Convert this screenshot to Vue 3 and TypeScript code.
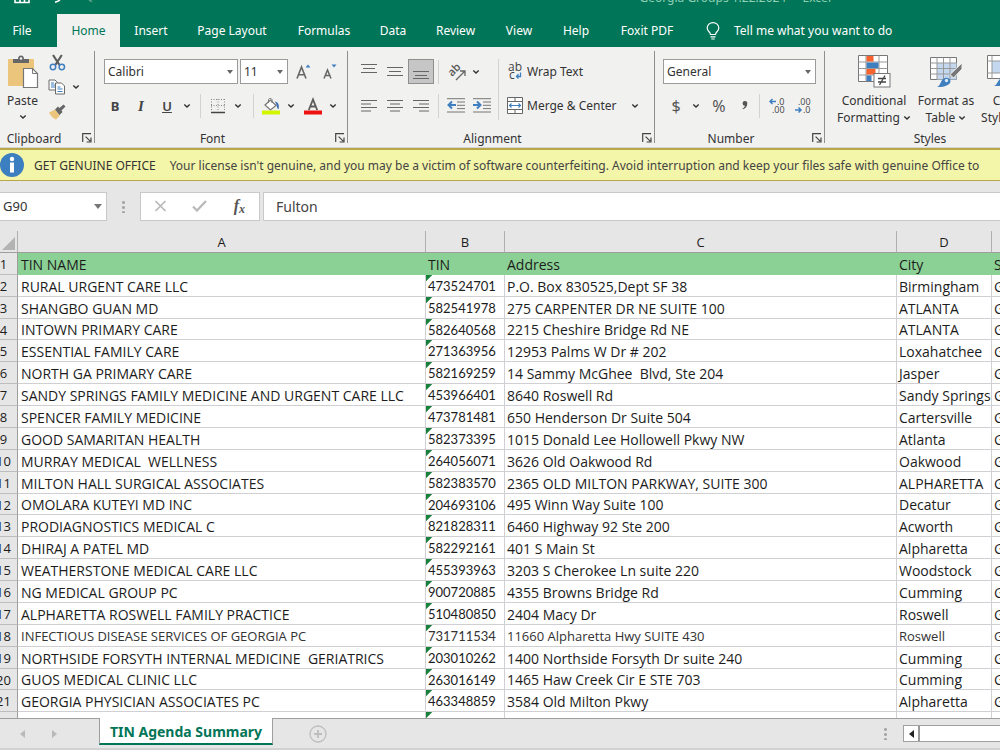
<script setup lang="ts">
import { ref } from 'vue'

interface Row {
  name: string
  tin: string
  address: string
  city: string
  small?: boolean
}

const tabs: string[] = ['File', 'Home', 'Insert', 'Page Layout', 'Formulas', 'Data', 'Review', 'View', 'Help', 'Foxit PDF']
const activeTab = ref('Home')
const fontName = ref('Calibri')
const fontSize = ref('11')
const numberFormat = ref('General')
const cellRef = ref('G90')
const formula = ref('Fulton')
const columns: string[] = ['A', 'B', 'C', 'D', 'E']

const rows: Row[] = [
  { name: 'RURAL URGENT CARE LLC', tin: '473524701', address: 'P.O. Box 830525,Dept SF 38', city: 'Birmingham' },
  { name: 'SHANGBO GUAN MD', tin: '582541978', address: '275 CARPENTER DR NE SUITE 100', city: 'ATLANTA' },
  { name: 'INTOWN PRIMARY CARE', tin: '582640568', address: '2215 Cheshire Bridge Rd NE', city: 'ATLANTA' },
  { name: 'ESSENTIAL FAMILY CARE', tin: '271363956', address: '12953 Palms W Dr # 202', city: 'Loxahatchee' },
  { name: 'NORTH GA PRIMARY CARE', tin: '582169259', address: '14 Sammy McGhee  Blvd, Ste 204', city: 'Jasper' },
  { name: 'SANDY SPRINGS FAMILY MEDICINE AND URGENT CARE LLC', tin: '453966401', address: '8640 Roswell Rd', city: 'Sandy Springs' },
  { name: 'SPENCER FAMILY MEDICINE', tin: '473781481', address: '650 Henderson Dr Suite 504', city: 'Cartersville' },
  { name: 'GOOD SAMARITAN HEALTH', tin: '582373395', address: '1015 Donald Lee Hollowell Pkwy NW', city: 'Atlanta' },
  { name: 'MURRAY MEDICAL  WELLNESS', tin: '264056071', address: '3626 Old Oakwood Rd', city: 'Oakwood' },
  { name: 'MILTON HALL SURGICAL ASSOCIATES', tin: '582383570', address: '2365 OLD MILTON PARKWAY, SUITE 300', city: 'ALPHARETTA' },
  { name: 'OMOLARA KUTEYI MD INC', tin: '204693106', address: '495 Winn Way Suite 100', city: 'Decatur' },
  { name: 'PRODIAGNOSTICS MEDICAL C', tin: '821828311', address: '6460 Highway 92 Ste 200', city: 'Acworth' },
  { name: 'DHIRAJ A PATEL MD', tin: '582292161', address: '401 S Main St', city: 'Alpharetta' },
  { name: 'WEATHERSTONE MEDICAL CARE LLC', tin: '455393963', address: '3203 S Cherokee Ln suite 220', city: 'Woodstock' },
  { name: 'NG MEDICAL GROUP PC', tin: '900720885', address: '4355 Browns Bridge Rd', city: 'Cumming' },
  { name: 'ALPHARETTA ROSWELL FAMILY PRACTICE', tin: '510480850', address: '2404 Macy Dr', city: 'Roswell' },
  { name: 'INFECTIOUS DISEASE SERVICES OF GEORGIA PC', tin: '731711534', address: '11660 Alpharetta Hwy SUITE 430', city: 'Roswell', small: true },
  { name: 'NORTHSIDE FORSYTH INTERNAL MEDICINE  GERIATRICS', tin: '203010262', address: '1400 Northside Forsyth Dr suite 240', city: 'Cumming' },
  { name: 'GUOS MEDICAL CLINIC LLC', tin: '263016149', address: '1465 Haw Creek Cir E STE 703', city: 'Cumming' },
  { name: 'GEORGIA PHYSICIAN ASSOCIATES PC', tin: '463348859', address: '3584 Old Milton Pkwy', city: 'Alpharetta' },
]
</script>

<template>
  <div class="app">
    <svg class="defs" aria-hidden="true">
      <symbol id="chev" viewBox="0 0 8 6"><path d="M1.300 1.500l2.700 2.600 2.700-2.600" fill="none" stroke="#333" stroke-width="1.400" /></symbol>
      <symbol id="launch" viewBox="0 0 10 10"><path d="M.7 9V.7H9M3.6 3.6l4.600 4.600M9 4.600V9H4.600" fill="none" stroke="#444" stroke-width="1.200" /></symbol>
    </svg>

    <header class="top">
      <div class="title-bar">
        <div class="quick">
          <svg width="16" height="4" viewBox="0 0 16 4"><path d="M1 0v2.500h14V0M6 0v2.500M10.500 0v2.500" fill="none" stroke="#fff" stroke-width="1.600" /></svg>
          <svg width="8" height="4" viewBox="0 0 8 4"><path d="M1 2.200Q4 1.500 6 0" fill="none" stroke="#fff" stroke-width="1.500" /></svg>
          <svg width="8" height="4" viewBox="0 0 8 4"><path d="M6 1.500L3 0" fill="none" stroke="#5da58a" stroke-width="1.500" /></svg>
        </div>
        <span class="title">Georgia Groups 1.22.2024 &nbsp;-&nbsp; Excel</span>
      </div>
      <nav class="tabs">
        <button v-for="t in tabs" :key="t" type="button" class="tab" :class="{ active: t === activeTab }" @click="activeTab = t">{{ t }}</button>
        <button type="button" class="tell">
          <svg width="14" height="18" viewBox="0 0 14 18" fill="none" stroke="#fff" stroke-width="1.200"><path d="M4.500 12.500c0-2.500-3.300-3.200-3.300-6.600a5.800 5.300 0 0 1 11.600 0c0 3.400-3.300 4.100-3.300 6.600zM4.500 14.800h5M5.300 17h3.400" /></svg>
          <span>Tell me what you want to do</span>
        </button>
      </nav>
    </header>

    <section class="ribbon">
      <div class="group clipboard">
        <div class="body">
          <button type="button" class="paste">
            <svg width="32" height="34" viewBox="0 0 32 34">
              <rect x="1" y="4" width="26" height="27" rx="1" fill="#ecc57c" />
              <path d="M6 8V4h5a3 3.500 0 0 1 6 0h5v4z" fill="#666" /><circle cx="14" cy="3.500" r="1.300" fill="#f1f1f0" />
              <path d="M16.500 13.500h9l5 5v14h-14z" fill="#fff" stroke="#777" stroke-width="1.200" /><path d="M25.500 13.500v5h5" fill="none" stroke="#777" />
            </svg>
            <span>Paste</span>
            <svg width="8" height="6"><use href="#chev" /></svg>
          </button>
          <div class="clips">
            <button type="button" aria-label="Cut">
              <svg width="17" height="17" viewBox="0 0 17 17" fill="none"><path d="M4 1l6.500 10M12.800 1L6.300 11" stroke="#5c5c5c" stroke-width="2.200" /><circle cx="4" cy="13" r="2.700" stroke="#3f7fbf" stroke-width="1.500" /><circle cx="12.800" cy="13" r="2.700" stroke="#3f7fbf" stroke-width="1.500" /></svg>
            </button>
            <button type="button" aria-label="Copy" class="copy">
              <svg width="18" height="16" viewBox="0 0 18 16"><path d="M1 1h6l2.500 2.500V11H1z" fill="#fff" stroke="#6a6a6a" /><path d="M3 4h3M3 6h4M3 8h4" stroke="#3f7fbf" /><path d="M7.500 4h6l3 3v8h-9z" fill="#fff" stroke="#6a6a6a" /><path d="M9.500 8h3M9.500 10h5M9.500 12.500h5" stroke="#3f7fbf" /></svg>
              <svg class="more" width="8" height="6"><use href="#chev" /></svg>
            </button>
            <button type="button" aria-label="Format Painter">
              <svg width="18" height="16" viewBox="0 0 18 16"><path d="M1 8.500l6-3 5 6-4 4C5 14.500 3 12 1 8.500z" fill="#ecc57c" /><path d="M7 5.500l3-3 1.500 1.500L15.500.500l2 2-4 4 1 1.500-3 3z" fill="#666" /></svg>
            </button>
          </div>
        </div>
        <div class="caption"><span>Clipboard</span><button type="button" class="launch" aria-label="Clipboard settings"><svg width="10" height="10"><use href="#launch" /></svg></button></div>
      </div>

      <div class="group font">
        <div class="body col">
          <div class="line">
            <label class="pick name"><select v-model="fontName" aria-label="Font"><option>Calibri</option></select></label>
            <label class="pick size"><select v-model="fontSize" aria-label="Font size"><option>11</option></select></label>
            <button type="button" class="w26 grow" aria-label="Increase font size">
              <svg width="15" height="18" viewBox="0 0 15 18"><path d="M1 15.500L5.500 4l4.500 11.500M2.600 11.800h5.800" fill="none" stroke="#666" stroke-width="1.600" /><path d="M9.500 4.500L12 1.500l2.500 3z" fill="#3f7fbf" /></svg>
            </button>
            <button type="button" class="w26" aria-label="Decrease font size">
              <svg width="15" height="18" viewBox="0 0 15 18"><path d="M1 15.500L4.500 7 8 15.500M2.300 12.500h4.400" fill="none" stroke="#666" stroke-width="1.500" /><path d="M8.500 1.500h5l-2.500 3z" fill="#3f7fbf" /></svg>
            </button>
          </div>
          <div class="line fmt">
            <button type="button" class="w26 glyph"><b>B</b></button>
            <button type="button" class="w26 glyph"><i>I</i></button>
            <button type="button" class="w26 glyph"><u>U</u></button>
            <button type="button" class="drop slim" aria-label="Underline styles"><svg width="8" height="6"><use href="#chev" /></svg></button>
            <span class="sep"></span>
            <button type="button" class="w22" aria-label="Borders">
              <svg width="16" height="16" viewBox="0 0 16 16"><path d="M1 1.500h14M1.500 1v12M14.500 1v12M8 1v12M1 7.500h14" stroke="#888" stroke-dasharray="1 1.500" /><path d="M1 14.500h14" stroke="#444" stroke-width="1.500" /></svg>
            </button>
            <button type="button" class="drop" aria-label="Border styles"><svg width="8" height="6"><use href="#chev" /></svg></button>
            <span class="sep"></span>
            <button type="button" class="w22" aria-label="Fill Color">
              <svg width="19" height="18" viewBox="0 0 19 18"><path d="M3 8l5.500-5L14 8.500 8.500 13z" fill="#fff" stroke="#777" stroke-width="1.200" /><path d="M6.500 6V2.500a2 2 0 0 1 3.500 0V6" fill="none" stroke="#777" /><path d="M13 4.500c3 .5 4.500 3 3.700 7.500-1.400 0-1.700-1.500-2-3.500z" fill="#3f6fb0" /><rect x="0" y="13.500" width="18" height="4" fill="#d2f500" /></svg>
            </button>
            <button type="button" class="drop" aria-label="Fill palette"><svg width="8" height="6"><use href="#chev" /></svg></button>
            <button type="button" class="w26" aria-label="Font Color">
              <svg width="18" height="18" viewBox="0 0 18 18"><path d="M4.800 13L9 2.500 13.200 13M6 9.500h6" fill="none" stroke="#5c5c5c" stroke-width="1.800" /><rect y="13.500" width="18" height="4" fill="#ee1111" /></svg>
            </button>
            <button type="button" class="drop slim" aria-label="Font palette"><svg width="8" height="6"><use href="#chev" /></svg></button>
          </div>
        </div>
        <div class="caption"><span>Font</span><button type="button" class="launch" aria-label="Font settings"><svg width="10" height="10"><use href="#launch" /></svg></button></div>
      </div>

      <div class="group alignment">
        <div class="body">
          <div class="col">
            <div class="line">
              <button type="button" class="w26" aria-label="Top Align"><svg width="16" height="16" viewBox="0 0 16 16"><path d="M0 .5h16M2 4.500h12M0 8.500h16" stroke="#666" /></svg></button>
              <button type="button" class="w26" aria-label="Middle Align"><svg width="16" height="16" viewBox="0 0 16 16"><path d="M0 3.500h16M2 7.500h12M0 11.500h16" stroke="#666" /></svg></button>
              <button type="button" class="w26 pressed" aria-label="Bottom Align"><svg width="16" height="16" viewBox="0 0 16 16"><path d="M0 7.500h16M2 11.500h12M0 14.500h16" stroke="#666" /></svg></button>
              <span class="sep"></span>
              <button type="button" class="w26" aria-label="Orientation">
                <svg width="20" height="18" viewBox="0 0 20 18"><text x="0" y="0" transform="translate(6 14) rotate(-45)" font-family="Open Sans, sans-serif" font-size="11" font-weight="600" fill="#555">ab</text><path d="M10 17L18.500 8.500M14 8h5v5" fill="none" stroke="#666" stroke-width="1.300" /></svg>
              </button>
              <button type="button" class="drop slim" aria-label="Orientation options"><svg width="8" height="6"><use href="#chev" /></svg></button>
            </div>
            <div class="line">
              <button type="button" class="w26" aria-label="Align Left"><svg width="16" height="12" viewBox="0 0 16 12"><path d="M0 .5h16M0 4h10M0 7.500h16M0 11h10" stroke="#666" /></svg></button>
              <button type="button" class="w26" aria-label="Center"><svg width="16" height="12" viewBox="0 0 16 12"><path d="M0 .5h16M3 4h10M0 7.500h16M3 11h10" stroke="#666" /></svg></button>
              <button type="button" class="w26" aria-label="Align Right"><svg width="16" height="12" viewBox="0 0 16 12"><path d="M0 .5h16M6 4h10M0 7.500h16M6 11h10" stroke="#666" /></svg></button>
              <span class="sep"></span>
              <button type="button" class="w26" aria-label="Decrease Indent"><svg width="18" height="15" viewBox="0 0 18 15"><path d="M0 .7h18M10 4h8M10 7.300h8M10 10.600h8M0 14h18" stroke="#777" /><path d="M9 7H2M5 3.500L1.500 7 5 10.500" fill="none" stroke="#3f7fbf" stroke-width="2" /></svg></button>
              <button type="button" class="w26" aria-label="Increase Indent"><svg width="18" height="15" viewBox="0 0 18 15"><path d="M0 .7h18M10 4h8M10 7.300h8M10 10.600h8M0 14h18" stroke="#777" /><path d="M0 7h7M4 3.500L7.500 7 4 10.500" fill="none" stroke="#3f7fbf" stroke-width="2" /></svg></button>
            </div>
          </div>
          <span class="sep tall"></span>
          <div class="col">
            <button type="button" class="line wide">
              <svg width="16" height="19" viewBox="0 0 16 19"><text x="1" y="9" font-family="Open Sans, sans-serif" font-size="12" fill="#444">ab</text><text x="2" y="17" font-family="Open Sans, sans-serif" font-size="12" fill="#444">c</text><path d="M13.500 10.500v4H9.500M11.500 12.300l-2 2.200 2 2" fill="none" stroke="#3f7fbf" stroke-width="1.300" /></svg>
              <span>Wrap Text</span>
            </button>
            <button type="button" class="line wide">
              <svg width="16" height="17" viewBox="0 0 16 17"><path d="M.5.500h15v16H.5zM.5 4.500h15M.5 12.500h15M8 .5v4M8 12.500v4" fill="#fff" stroke="#666" /><path d="M2.500 8.500h11M4.500 6.500l-2 2 2 2M11.500 6.500l2 2-2 2" fill="none" stroke="#3f7fbf" stroke-width="1.200" /></svg>
              <span>Merge &amp; Center</span>
              <svg class="push" width="8" height="6"><use href="#chev" /></svg>
            </button>
          </div>
        </div>
        <div class="caption"><span>Alignment</span><button type="button" class="launch" aria-label="Alignment settings"><svg width="10" height="10"><use href="#launch" /></svg></button></div>
      </div>

      <div class="group number">
        <div class="body col">
          <div class="line"><label class="pick general"><select v-model="numberFormat" aria-label="Number format"><option>General</option></select></label></div>
          <div class="line">
            <button type="button" class="w26 sign">$</button>
            <button type="button" class="drop slim" aria-label="Currency"><svg width="8" height="6"><use href="#chev" /></svg></button>
            <button type="button" class="sign percent">%</button>
            <button type="button" class="sign comma" aria-label="Comma Style"><svg width="6" height="9" viewBox="0 0 6 9"><path d="M3 0a2.300 2.300 0 0 1 2.300 2.500C5.300 5.500 3.500 7.500.8 8.300L.5 7.500C2 6.800 2.800 5.800 2.900 4.700A2.300 2.300 0 0 1 3 0z" fill="#555" /></svg></button>
            <span class="sep"></span>
            <button type="button" class="w26" aria-label="Increase Decimal"><svg width="17" height="16" viewBox="0 0 17 16"><path d="M7 3.500H1M3.500 1L1 3.500 3.500 6" fill="none" stroke="#3f7fbf" stroke-width="1.500" /><text x="8" y="7" font-family="Open Sans, sans-serif" font-size="9" fill="#444">.0</text><text x="3" y="15" font-family="Open Sans, sans-serif" font-size="9" fill="#444">.00</text></svg></button>
            <button type="button" class="w26" aria-label="Decrease Decimal"><svg width="17" height="16" viewBox="0 0 17 16"><path d="M0 12h6M3.500 9.500L6 12l-2.500 2.500" fill="none" stroke="#3f7fbf" stroke-width="1.500" /><text x="3" y="7" font-family="Open Sans, sans-serif" font-size="9" fill="#444">.00</text><text x="8" y="15" font-family="Open Sans, sans-serif" font-size="9" fill="#444">.0</text></svg></button>
          </div>
        </div>
        <div class="caption"><span>Number</span><button type="button" class="launch" aria-label="Number settings"><svg width="10" height="10"><use href="#launch" /></svg></button></div>
      </div>

      <div class="group styles">
        <div class="body">
          <button type="button" class="big first">
            <svg width="34" height="34" viewBox="0 0 34 34"><path d="M1.500 1.500h29v26h-29z" fill="#fff" stroke="#777" /><path d="M9 1.500v26M22 1.500v26M1.500 8h29M1.500 14.500h29M1.500 21h29" stroke="#999" /><path d="M9.500 2h7v5.500h-7zM9.500 15h9v5.500h-9z" fill="#f8622f" /><path d="M9.500 8.500h12V14h-12zM9.500 21.500h5V27h-5z" fill="#3f7fbf" /><rect x="17" y="19.500" width="16" height="13.500" fill="#fff" stroke="#777" /><path d="M21 24.500h8M21 28h8M28 21.500l-5.500 9.500" stroke="#444" stroke-width="1.300" /></svg>
            <span>Conditional<br>Formatting <svg width="8" height="6"><use href="#chev" /></svg></span>
          </button>
          <button type="button" class="big">
            <svg width="34" height="34" viewBox="0 0 34 34"><path d="M1.500 3.500h26v22h-26z" fill="#fff" stroke="#777" /><path d="M8 9h19.500v16.500H8z" fill="#c3d8ef" /><path d="M8 3.500v22M14.500 3.500v22M21 3.500v22M1.500 9h26M1.500 14.500h26M1.500 20h26" stroke="#999" /><path d="M33 9v6l-8.500 9-3.500-3.500z" fill="#777" stroke="#f1f1f0" /><path d="M8 33c3-1 3-4 5.500-7.500 3-3.500 8-1.500 8 1.500 0 4.500-8 6.500-13.500 6z" fill="#3f7fbf" /><circle cx="17.500" cy="26.500" r="1.700" fill="#dce9f6" /></svg>
            <span>Format as<br>Table <svg width="8" height="6"><use href="#chev" /></svg></span>
          </button>
          <button type="button" class="big last">
            <svg width="34" height="34" viewBox="0 0 34 34"><path d="M1.500 1.500h29v23h-29z" fill="#fff" stroke="#777" /><path d="M6 7h20v12H6z" fill="#c3d8ef" /><path d="M6 1.500v23M26 1.500v23M1.500 7h29M1.500 19h29" stroke="#999" /><path d="M8 32c3-1 3-4 5.500-6.500 3-3 8-1.500 8 1.500 0 4.500-8 5.500-13.500 5z" fill="#3f7fbf" /></svg>
            <span>Cell<br>Styles <svg width="8" height="6"><use href="#chev" /></svg></span>
          </button>
        </div>
        <div class="caption"><span>Styles</span></div>
      </div>
    </section>

    <div class="notice" role="status">
      <svg width="24" height="24" viewBox="0 0 24 24"><circle cx="12" cy="12" r="12" fill="#3c7fc0" /><circle cx="12" cy="6" r="2.200" fill="#fff" /><rect x="10" y="9.500" width="4" height="10" fill="#fff" /></svg>
      <span class="lead">GET GENUINE OFFICE</span>
      <span>Your license isn't genuine, and you may be a victim of software counterfeiting. Avoid interruption and keep your files safe with genuine Office to</span>
    </div>

    <div class="formula-bar">
      <label class="pick ref"><input v-model="cellRef" aria-label="Name box"></label>
      <span class="dots"></span>
      <div class="checks">
        <button type="button" aria-label="Cancel"><svg width="13" height="12" viewBox="0 0 13 12"><path d="M1.500 1l10 10M11.500 1l-10 10" stroke="#b8b8b8" stroke-width="1.700" /></svg></button>
        <button type="button" aria-label="Enter"><svg width="15" height="12" viewBox="0 0 15 12"><path d="M1 6.500l4 4L14 1" fill="none" stroke="#b8b8b8" stroke-width="2.200" /></svg></button>
        <button type="button" class="fx" aria-label="Insert Function"><i>f</i><i class="x">x</i></button>
      </div>
      <input v-model="formula" class="formula" aria-label="Formula bar">
    </div>

    <main class="sheet">
      <table>
        <colgroup><col class="c-num"><col class="c-a"><col class="c-b"><col class="c-c"><col class="c-d"><col class="c-e"></colgroup>
        <thead>
          <tr>
            <th class="corner"><svg width="13" height="13" viewBox="0 0 13 13"><path d="M13 0v13H0z" fill="#b3b3b3" /></svg></th>
            <th v-for="c in columns" :key="c" scope="col">{{ c }}</th>
          </tr>
        </thead>
        <tbody>
          <tr class="fields">
            <th scope="row">1</th>
            <td>TIN NAME</td><td>TIN</td><td>Address</td><td>City</td><td>State</td>
          </tr>
          <tr v-for="(r, i) in rows" :key="r.tin" :class="{ small: r.small }">
            <th scope="row">{{ i + 2 }}</th>
            <td>{{ r.name }}</td><td class="flag">{{ r.tin }}</td><td>{{ r.address }}</td><td>{{ r.city }}</td><td>GA</td>
          </tr>
          <tr><th scope="row">22</th><td></td><td class="flag"></td><td></td><td></td><td></td></tr>
        </tbody>
      </table>
    </main>

    <footer class="sheet-tabs">
      <button type="button" class="nav" aria-label="Previous sheet"><svg width="6" height="8" viewBox="0 0 6 8"><path d="M5 0v8L0 4z" fill="#b9b9b9" /></svg></button>
      <button type="button" class="nav" aria-label="Next sheet"><svg width="6" height="8" viewBox="0 0 6 8"><path d="M1 0v8l5-4z" fill="#b9b9b9" /></svg></button>
      <button type="button" class="current">TIN Agenda Summary</button>
      <button type="button" class="add" aria-label="New sheet"><svg width="18" height="18" viewBox="0 0 18 18" fill="none" stroke="#bdbdbd"><circle cx="9" cy="9" r="8" stroke-width="1.300" /><path d="M9 5v8M5 9h8" stroke-width="1.800" /></svg></button>
      <span class="dots"></span>
      <div class="scroll"><button type="button" aria-label="Scroll left"><svg width="5" height="8" viewBox="0 0 5 8"><path d="M5 0v8L0 4z" fill="#222" /></svg></button><span class="thumb"></span></div>
    </footer>
  </div>
</template>

<style>
body { margin: 0; background: #e6e6e6; }
</style>

<style scoped>
.app { height: 100vh; display: flex; flex-direction: column; overflow: hidden; background: #e6e6e6; font: 12px/16px "Noto Sans", "Open Sans", sans-serif; color: #333; }
.app * { box-sizing: border-box; }
button { font: inherit; color: inherit; background: none; border: 0; padding: 0; margin: 0; display: flex; align-items: center; justify-content: center; flex: none; white-space: nowrap; }
svg { display: block; flex: none; }
.defs { position: absolute; width: 0; height: 0; }

.top { background: #017557; color: #fff; flex: none; }
.title-bar { height: 14px; overflow: hidden; display: flex; justify-content: space-between; }
.quick { display: flex; gap: 24px; padding-left: 14px; }
.title { margin: -10px 169px 0 0; color: #8fd0b5; white-space: nowrap; }
.tabs { display: grid; grid-template-columns: 57px 63px 62px 100px 84px 54px 71px 56px 58px 84px 1fr; height: 33px; }
.tab:first-child { padding-right: 13px; }
.tab.active { background: #f1f1f0; color: #017557; }
.tell { justify-content: flex-start; gap: 14px; padding-left: 17px; }

.ribbon { display: flex; flex: none; background: #f1f1f0; border-bottom: 1px solid #d5d5d5; overflow: hidden; }
.group { position: relative; flex: none; padding: 12px 0 0 8px; }
.group:not(.styles)::after { content: ""; position: absolute; right: 0; top: 4px; bottom: 4px; width: 1px; background: #8f8f8f; }
.clipboard { width: 95px; padding-left: 0; }
.font { width: 253px; }
.alignment { width: 307px; }
.number { width: 170px; }
.styles { flex: 1 0 210px; padding-left: 10px; }
.body { display: flex; height: 71px; }
.col { display: flex; flex-direction: column; gap: 9px; }
.line { display: flex; align-items: center; height: 25px; }
.caption { position: relative; display: flex; justify-content: center; height: 17px; line-height: 17px; padding-right: 18px; margin-left: -8px; }
.clipboard .caption { margin-left: 0; padding-right: 27px; }
.styles .caption { padding-right: 0; margin-left: -10px; }
.launch { position: absolute; right: 3px; top: 3px; }
.w22 { width: 22px; }
.w26 { width: 26px; height: 25px; }
.drop { width: 18px; height: 25px; }
.drop.slim { width: 14px; }
.sep { width: 1px; height: 24px; margin: 0 4px; background: #d2d2d2; flex: none; }
.fmt .sep { margin: 0 6px; }
.sep.tall { height: 61px; margin: 0 8px 0 3px; }
.fmt { margin-left: -1px; }
.glyph { font-size: 13px; color: #444; }
.glyph i { font-family: "Liberation Serif", serif; font-weight: bold; font-size: 15px; }
.glyph u { font-weight: 600; }

.paste { width: 43px; height: 66px; flex-direction: column; justify-content: flex-start; margin-top: -4px; padding-left: 2px; }
.paste span { line-height: 24px; }
.paste svg:last-child { margin-top: 1px; }
.clips { display: flex; flex-direction: column; gap: 9px; margin: -5px 0 0 5px; }
.clips button { width: 18px; height: 16px; }
.copy .more { margin-left: 6px; }
.clips .copy { width: 32px; }

.pick { position: relative; display: flex; height: 25px; background: #fff; border: 1px solid #9b9b9b; }
.pick::after { content: ""; position: absolute; right: 4px; top: 10px; border: 3px solid transparent; border-top: 4px solid #666; pointer-events: none; }
.pick select, .pick input { appearance: none; width: 100%; border: 0; padding: 0 3px; margin: 0; background: transparent; font: inherit; color: #333; outline: 0; }
.name { width: 134px; margin: 0 2px 0 1px; }
.size { width: 48px; }
.grow { margin: 0 1px 0 2px; }
.general { width: 153px; }
.pressed { background: #c6c6c6; border: 1px solid #8f8f8f; }
.wide { gap: 4px; justify-content: flex-start; }
.push { margin-left: 10px; }
.sign { font-size: 16px; color: #555; }
.percent { width: 32px; }
.comma { width: 20px; }
.big { flex-direction: column; width: 66px; justify-content: flex-start; align-self: flex-start; margin-top: -5px; line-height: 17px; }
.big.first { width: 78px; }
.big.last { width: 48px; }
.big > span { margin-top: 4px; }
.big span svg { display: inline-block; vertical-align: 1px; }

.notice { display: flex; align-items: center; flex: none; height: 33px; border: solid #b9a84a; border-width: 2px 0 1px; background: #f3f5a9; overflow: hidden; white-space: nowrap; color: #444; }
.notice span { padding-top: 2px; }
.notice .lead { margin: 0 14px 0 10px; color: #333; }

.formula-bar { display: flex; align-items: center; flex: none; height: 50px; font-size: 13px; }
.formula-bar .ref { width: 107px; height: 29px; border-color: #c9c9c9; border-left: 0; }
.ref::after { top: 11px; border-width: 4px; border-top: 5px solid #777; }
.dots { width: 3px; height: 13px; flex: none; background: radial-gradient(circle, #a5a5a5 1px, transparent 2px) 0 0 / 3px 5px; }
.formula-bar .dots { margin: 0 15px; }
.checks { display: flex; width: 120px; height: 29px; background: #fff; border: 1px solid #c9c9c9; }
.checks button { flex: 1; }
.fx { font: bold 16px/20px "Liberation Serif", serif; color: #555; }
.fx .x { font-size: 12px; margin-top: 5px; }
.formula { flex: 1; min-width: 0; height: 29px; margin-left: 3px; border: 1px solid #c9c9c9; border-right: 0; padding: 0 12px; background: #fff; font: inherit; font-size: 14px; color: #444; outline: 0; }

.sheet { flex: 1; min-height: 0; overflow: hidden; }
table { table-layout: fixed; width: 1080px; margin-left: -10px; border-collapse: separate; border-spacing: 0; font: 14px/19px "Open Sans", "Noto Sans", sans-serif; color: #1c1c1c; }
.c-num { width: 28px; }
.c-a { width: 408px; }
.c-b { width: 79px; }
.c-c { width: 392px; }
.c-d { width: 95px; }
.c-e { width: 78px; }
th { padding: 2px 0 0; font-size: 13px; font-weight: normal; background: #e6e6e6; border-right: 1px solid #9e9e9e; border-bottom: 1px solid #bdbdbd; }
thead th { height: 22px; border-bottom-color: #9e9e9e; border-right-color: #b0b0b0; }
.corner svg { margin: 2px 0 0 12px; }
tbody tr { height: 22px; }
tbody tr:nth-child(8n + 4) { height: 21px; line-height: 18px; }
td { padding: 2px 0 0 2px; background: #fff; border-right: 1px solid #d0d0d4; border-bottom: 1px solid #d0d0d4; white-space: pre; }
td:nth-child(2) { padding-left: 3px; }
.fields td { background: #8bd196; border-color: #8bd196; }
.flag { background: linear-gradient(135deg, #17803a 4px, transparent 5px) #fff; font-family: Lato, "Open Sans", sans-serif; font-size: 13px; }
.small td { font-size: 13px; color: #333; }

.sheet-tabs { display: flex; flex: none; height: 32px; border-top: 1px solid #9e9e9e; border-bottom: 2px solid #d2d2d2; }
.nav { width: 31px; }
.nav:first-child { margin-left: 7px; }
.current { width: 174px; height: 27px; margin: -1px 0 0 30px; padding-top: 2px; background: #fff; border: solid #9e9e9e; border-width: 0 1px; border-bottom: 2px solid #017557; color: #017557; font-size: 14px; font-weight: bold; }
.add { margin-left: 36px; }
.sheet-tabs .dots { margin: 8px 16px 0 auto; }
.scroll { display: flex; width: 97px; height: 17px; margin-top: 6px; background: #fff; border: 1px solid #a0a0a0; border-right: 0; }
.scroll button { width: 16px; border-right: 2px solid #999; }
</style>
